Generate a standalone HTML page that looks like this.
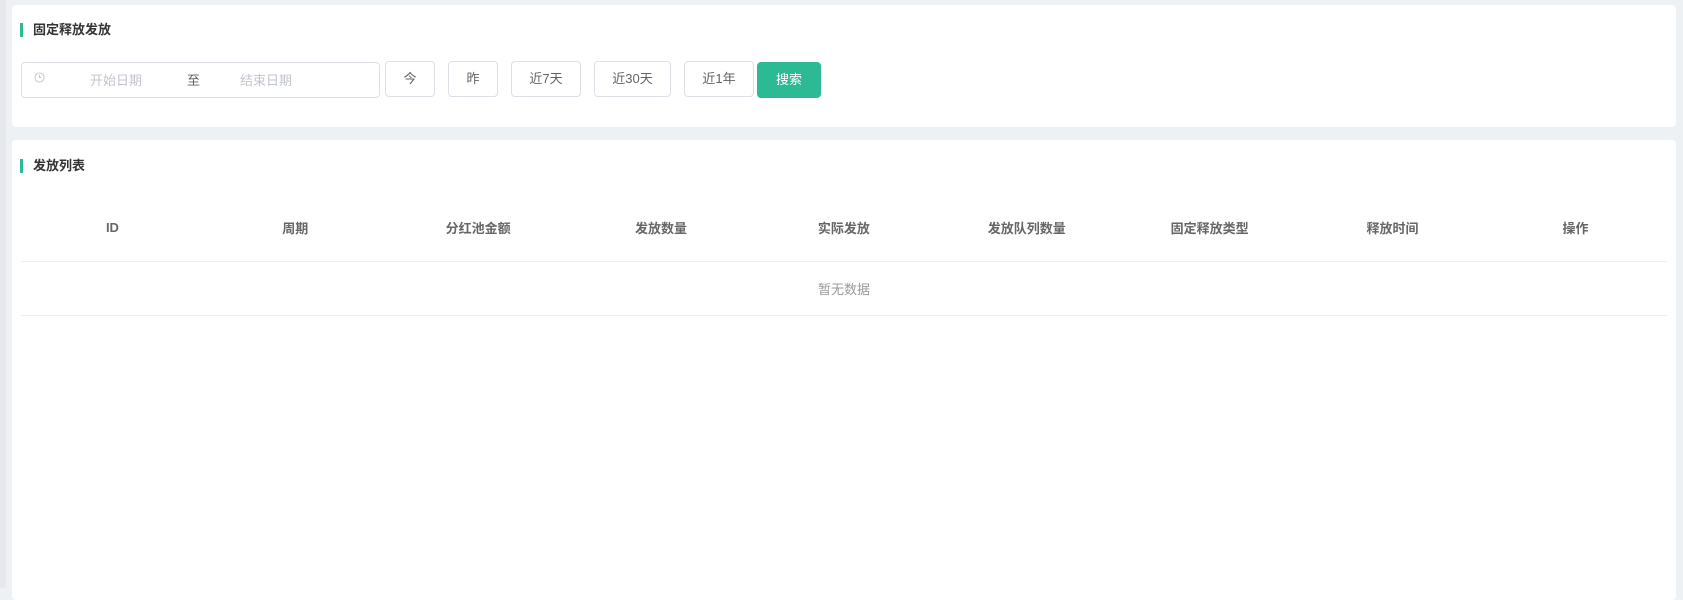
<!DOCTYPE html>
<html><head><meta charset="utf-8"><style>
*{margin:0;padding:0;box-sizing:border-box}
body{width:1683px;height:588px;background:#eef1f4;font-family:"Liberation Sans","Noto Sans CJK SC",sans-serif;position:relative;overflow:hidden}
.card{position:absolute;left:12px;width:1664px;background:#fff;border-radius:4px}
.t{position:absolute;left:11px;font-size:13px;font-weight:bold;color:#333;line-height:14px}
.t:before{content:"";position:absolute;left:-3px;top:0;width:3px;height:14px;background:#2bba94}
.t span{margin-left:3px;padding-left:7px}
.inp{position:absolute;left:9px;top:57px;width:359px;height:36px;border:1px solid #dcdfe6;border-radius:4px;font-size:13px;color:#c0c4cc}
.inp span{position:absolute;top:7px}
.btn{position:absolute;top:56px;height:36px;border:1px solid #dcdfe6;border-radius:4px;font-size:13px;color:#606266;text-align:center;line-height:34px;background:#fff}
.g{background:#2bba94;border-color:#2bba94;color:#fff}
table{position:absolute;left:9px;top:55px;width:1646px;border-collapse:collapse;font-size:13px}
th{height:66px;color:#666;font-weight:bold;border-bottom:1px solid #ebeef5;width:183px}
td{height:54px;text-align:center;color:#999;border-bottom:1px solid #ebeef5}
</style></head><body>
<div style="position:absolute;left:0;top:0;width:6px;height:588px;background:#e6e8eb"></div>
<div class="card" style="top:5px;height:122px">
<div class="t" style="top:18px"><span>固定释放发放</span></div>
<div class="inp">
<svg style="position:absolute;left:12px;top:9px" width="11" height="11" viewBox="0 0 12 12"><circle cx="6" cy="6" r="5" fill="none" stroke="#c0c4cc" stroke-width="1"/><path d="M6 3v3h2" fill="none" stroke="#c0c4cc"/></svg>
<span style="left:68px">开始日期</span><span style="left:165px;color:#606266">至</span><span style="left:218px">结束日期</span></div>
<div class="btn" style="left:373px;width:50px">今</div>
<div class="btn" style="left:436px;width:50px">昨</div>
<div class="btn" style="left:499px;width:70px">近7天</div>
<div class="btn" style="left:582px;width:77px">近30天</div>
<div class="btn" style="left:672px;width:70px">近1年</div>
<div class="btn g" style="left:745px;width:64px;top:57px">搜索</div>
</div>
<div class="card" style="top:140px;height:460px">
<div class="t" style="top:19px"><span>发放列表</span></div>
<table><tr><th>ID</th><th>周期</th><th>分红池金额</th><th>发放数量</th><th>实际发放</th><th>发放队列数量</th><th>固定释放类型</th><th>释放时间</th><th>操作</th></tr>
<tr><td colspan="9">暂无数据</td></tr></table>
</div>
</body></html>
